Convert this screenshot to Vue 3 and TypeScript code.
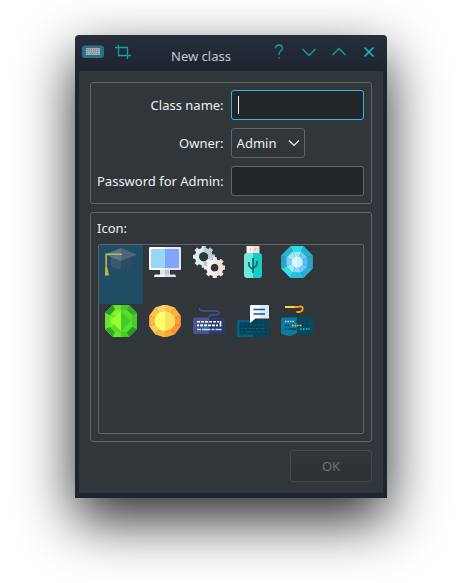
<script setup lang="ts">
import { ref } from 'vue'

interface Shape {
  d: string
  fill?: string
  stroke?: string
  width?: number
}

interface ClassIcon {
  name: string
  shapes: Shape[]
}

const className = ref('')
const owner = ref('Admin')
const password = ref('')
const selected = ref('Graduation cap')

/** Point on a circle, angle in degrees clockwise from the top. */
function polar(cx: number, cy: number, r: number, deg: number): string {
  const a = ((deg - 90) * Math.PI) / 180
  return `${(cx + r * Math.cos(a)).toFixed(2)} ${(cy + r * Math.sin(a)).toFixed(2)}`
}

/** Toothed wheel with a round hole, limited to one half or complete. */
function gear(cx: number, cy: number, outer: number, inner: number, hole: number, half: boolean): string {
  const points: string[] = []
  const teeth = half ? 4 : 8
  if (half) points.push(`${cx} ${cy - outer}`)
  for (let i = 0; i < teeth; i++) {
    const base = i * 45
    if (!(half && i === 0)) points.push(polar(cx, cy, outer, base - 10))
    points.push(polar(cx, cy, outer, base + 10), polar(cx, cy, inner, base + 13), polar(cx, cy, inner, base + 32))
  }
  if (half) {
    points.push(polar(cx, cy, outer, 170), `${cx} ${cy + outer}`, `${cx} ${cy + hole}`)
    return `M${points.join('L')}A${hole} ${hole} 0 0 0 ${cx} ${cy - hole}Z`
  }
  return `M${points.join('L')}ZM${cx} ${cy - hole}a${hole} ${hole} 0 1 0 .01 0Z`
}

/** Ring of facets between two radii, one colour per side. */
function facets(outer: number, inner: number, offset: number, colours: string[]): Shape[] {
  const step = 360 / colours.length
  return colours.map((fill, i) => {
    const a = offset + i * step
    const b = a + step
    return {
      d: `M${polar(16, 16, outer, a)}L${polar(16, 16, outer, b)}L${polar(16, 16, inner, b)}L${polar(16, 16, inner, a)}Z`,
      fill,
    }
  })
}

const icons: ClassIcon[] = [
  {
    name: 'Graduation cap',
    shapes: [
      { d: 'M6 11h10v12q-7 0-10-3z', fill: '#3d586c' },
      { d: 'M16 11h10v9q-3 3-10 3z', fill: '#314b60' },
      { d: 'M16 2v13L0 8.5z', fill: '#587589' },
      { d: 'M16 2v13l16-6.5z', fill: '#49677c' },
      { d: 'M17 8.2H1.2V25', stroke: '#c9b83a', width: 1.5 },
      { d: 'M.5 21h1.7L4 29.5H0z', fill: '#c9b83a' },
    ],
  },
  {
    name: 'Monitor',
    shapes: [
      { d: 'M11 23h5v6h-5z', fill: '#dfe3f2' },
      { d: 'M16 23h5v6h-5z', fill: '#bfc4db' },
      { d: 'M6 28.5h10V31H5q0-2 1-2.500z', fill: '#f0f3fb' },
      { d: 'M16 28.500h10q1 .5 1 2.500H16z', fill: '#d9ddec' },
      { d: 'M1 1h15v23H1q-1 0-1-1V2q0-1 1-1z', fill: '#f7f9ff' },
      { d: 'M16 1h15q1 0 1 1v21q0 1-1 1H16z', fill: '#e4e8f8' },
      { d: 'M2 3h14v19H2z', fill: '#9dd6f5' },
      { d: 'M16 3h14v19H16z', fill: '#80a6ff' },
    ],
  },
  {
    name: 'Gears',
    shapes: [
      { d: gear(10.7, 10.7, 11.2, 8.9, 4.7, false), fill: '#e3edef' },
      { d: gear(10.7, 10.7, 11.2, 8.9, 4.7, true), fill: '#b7d0d8' },
      { d: gear(21.7, 21.7, 10.7, 8.5, 3.9, false), fill: '#fff3f0' },
      { d: gear(21.7, 21.7, 10.7, 8.5, 3.9, true), fill: '#f0dfda' },
    ],
  },
  {
    name: 'USB stick',
    shapes: [
      { d: 'M9.500 0H16v8H9.500z', fill: '#fff0ec' },
      { d: 'M16 0h6.500v8H16z', fill: '#eedcd7' },
      { d: 'M13.500 2v2.500M18.500 2v2.500', stroke: '#d5c2bf', width: 1.2 },
      { d: 'M10 7h6v25h-6q-3 0-3-3V10q0-3 3-3z', fill: '#6ee8d7' },
      { d: 'M16 7h6q3 0 3 3v19q0 3-3 3h-6z', fill: '#16cdc1' },
      { d: 'M16 12v15M12 16v3q0 2 4 4.500M20 15v3q0 2-4 4', stroke: '#0d5f7b', width: 1.6 },
    ],
  },
  {
    name: 'Diamond',
    shapes: [
      ...facets(17.2, 11, -22.5, ['#2cdde6', '#28afcc', '#27a6c6', '#28b0cf', '#28bfd8', '#2ce3e9', '#27a7c6', '#28b3d0']),
      ...facets(11.4, 6, -22.5, ['#8feeff', '#66ccff', '#58bfff', '#66ccff', '#7fdcff', '#9ceaff', '#7ad4ff', '#9be9ff']),
      { d: `M${[0, 45, 90, 135, 180, 225, 270, 315].map((a) => polar(16, 16, 6.2, a - 22.5)).join('L')}Z`, fill: '#c4f5ff' },
      { d: 'M16 9.800L11 14v5l5 3z', fill: '#dcfaff' },
    ],
  },
  {
    name: 'Emerald',
    shapes: [
      { d: 'M8 0h16l8 8v16l-8 8H8l-8-8V8z', fill: '#45cc29' },
      { d: 'M8 0h8v5H9L5 9v14l4 4h7v5H8l-8-8V8z', fill: '#66e52c' },
      { d: 'M8 0l2 5-5 5-5-2zM24 32l-2-5 5-5 5 2z', fill: '#279c24' },
      { d: 'M24 0l-2 5 5 5 5-2zM8 32l2-5-5-5-5 2z', fill: '#33ad27' },
      { d: 'M10 5h12l5 5v12l-5 5H10l-5-5V10z', fill: '#5bdc2a' },
      { d: 'M5 10v12l11-6zM10 5h6v11L6 9z', fill: '#7df033' },
      { d: 'M16 6v20L6 16z', fill: '#99ff33' },
      { d: 'M16 6l10 10-10 10z', fill: '#42cc29' },
    ],
  },
  {
    name: 'Amber',
    shapes: [
      ...facets(16.6, 10.4, 0, [
        '#ffc34d', '#ffb33c', '#ff9c33', '#ff9833', '#ffa436', '#ffb743', '#ffcc57', '#ffb64a', '#ffc64f', '#ffd266',
      ]),
      { d: `M${[0, 36, 72, 108, 144, 180, 216, 252, 288, 324].map((a) => polar(16, 16, 10.6, a)).join('L')}Z`, fill: '#ffdf5e' },
      { d: 'M16 5.400v21.200l-6.200-2-3.800-5.300v-6.600l3.800-5.300z', fill: '#ffff66' },
    ],
  },
  {
    name: 'Keyboard',
    shapes: [
      { d: 'M6.500 3q0 3 3 3H23q3 0 3 2t-3 2h-5q-2 0-2 3', stroke: '#46548f', width: 1.3 },
      { d: 'M2 12.500h14V29H2q-2 0-2-2V14.500q0-2 2-2z', fill: '#47568f' },
      { d: 'M16 12.500h14q2 0 2 2V27q0 2-2 2H16z', fill: '#2d396e' },
      { d: 'M4 16.800h3m1 0h3m1 0h3m1 0h3m1 0h3m1 0h2M4 20.400h2m1 0h3m1 0h3m1 0h3m1 0h3m1 0h2M27.500 16v5.500', stroke: '#ffffff', width: 1.6 },
      { d: 'M4 24.500h4m1 0h8.500m1 0h3m1 0h6', stroke: '#a9e3f8', width: 1.6 },
    ],
  },
  {
    name: 'Keyboard chat',
    shapes: [
      { d: 'M1.500 15H16v17H1.500Q0 32 0 30.500v-14Q0 15 1.500 15z', fill: '#07607f' },
      { d: 'M16 15h14.500q1.500 0 1.500 1.500v14q0 1.500-1.500 1.500H16z', fill: '#06465c' },
      { d: 'M2.500 17.500h27v12h-27z', fill: '#064055' },
      { d: 'M4 20h3m1 0h3m1 0h3m1 0h3m1 0h3m1 0h4M4 23.500h2m1 0h3m1 0h3m1 0h3m1 0h3m1 0h5M4 27h3m1 0h12m1 0h3m1 0h3', stroke: '#076079', width: 1.2 },
      { d: 'M13.500 0H23v13.500h-4.500L13 18V.500q0-.500.500-.500z', fill: '#f4f8ff' },
      { d: 'M23 0h8.500q.500 0 .500.500V13q0 .500-.500.500H23z', fill: '#dde8f8' },
      { d: 'M16.500 4.500H28M16.500 9H28', stroke: '#07607f', width: 1.5 },
    ],
  },
  {
    name: 'Wave keyboard',
    shapes: [
      { d: 'M16.500 12.500V8q0-1 2-1', stroke: '#083f54', width: 2 },
      { d: 'M4 2h10', stroke: '#ffd23c', width: 2 },
      { d: 'M13.500 2q4 0 6-.500 2.500 0 2.200 2.500-.300 3-3.700 3h-2.500', stroke: '#ff9f22', width: 1.8 },
      { d: 'M2 12.500h14V28q-3 1-5 2.500-5 1.500-11-2V14.500q0-2 2-2z', fill: '#0a7a9e' },
      { d: 'M16 12.500h14q2 0 2 2v14q-6 3.500-11 2Q19 29 16 28z', fill: '#08495f' },
      { d: 'M4 16.500h1.500m1 0h1.500m1 0h1.500m1 0h1.500', stroke: '#ecc9ee', width: 1.5 },
      { d: 'M15 16.500h1.500m1 0h1.500m2 0h1.500m2 0h3M4 20.500h1.500m1 0h1.500m13.500 0h1.500m1.500 0h3M4 24h1.500m2 0h8', stroke: '#063d50', width: 1.5 },
      { d: 'M11 20.500h1.500m1 0h1.500m1 0h1.500m1 0h2', stroke: '#ffc33a', width: 1.5 },
      { d: 'M19 24h1.500m1.500 0h1.500m1.500 0h1.500m1 0h1', stroke: '#17d2cf', width: 1.5 },
    ],
  },
]
</script>

<template>
  <div class="desktop">
    <section class="window" aria-labelledby="window-title">
      <header class="titlebar">
        <div class="tools">
          <svg class="app-icon" viewBox="0 0 22 14" aria-hidden="true">
            <rect x="0.500" y="1" width="21" height="11.500" rx="2" fill="#16789a" stroke="#4e6472" />
            <rect x="4" y="3" width="14" height="7" fill="#a6a9a9" />
            <path d="M5 4.500h12M5 6.500h12M5 8.500h2m1 0h6m1 0h2" stroke="#7d8385" stroke-width="1" stroke-dasharray="1 1" />
          </svg>
          <button class="title-button" type="button" aria-label="Tile window">
            <svg viewBox="0 0 16 16"><path d="M3.500 1v10.500H16M0 3.500h12.500V15" /></svg>
          </button>
        </div>
        <h1 id="window-title" class="title">New class</h1>
        <div class="window-buttons">
          <button class="title-button" type="button" aria-label="Help">
            <svg viewBox="0 0 16 16"><path d="M4.500 4.500q0-3.500 3.500-3.500t3.500 3.200c0 2.800-3.500 2.800-3.500 5.500v1.300M8 13.200v1.600" /></svg>
          </button>
          <button class="title-button" type="button" aria-label="Minimize">
            <svg viewBox="0 0 16 16"><path d="M1.500 5L8 11.500 14.500 5" /></svg>
          </button>
          <button class="title-button" type="button" aria-label="Maximize">
            <svg viewBox="0 0 16 16"><path d="M1.500 11L8 4.500l6.500 6.500" /></svg>
          </button>
          <button class="title-button" type="button" aria-label="Close">
            <svg viewBox="0 0 16 16"><path class="cross" d="M3.500 3.500l9 9M12.500 3.500l-9 9" /></svg>
          </button>
        </div>
      </header>

      <form class="content" @submit.prevent>
        <div class="group fields">
          <label for="class-name">Class name:</label>
          <input id="class-name" v-model="className" class="control text-box current" type="text" />
          <label for="owner">Owner:</label>
          <div class="select-wrap">
            <select id="owner" v-model="owner" class="control owner">
              <option>Admin</option>
            </select>
            <svg class="arrow" viewBox="0 0 12 8" aria-hidden="true"><path d="M1 1.500l5 5 5-5" /></svg>
          </div>
          <label for="password">Password for Admin:</label>
          <input id="password" v-model="password" class="control text-box" type="password" />
        </div>

        <div class="group picker">
          <span id="icon-label">Icon:</span>
          <div class="icon-list" role="group" aria-labelledby="icon-label">
            <button
              v-for="icon in icons"
              :key="icon.name"
              type="button"
              class="icon-cell"
              :class="{ selected: icon.name === selected }"
              :aria-label="icon.name"
              :aria-pressed="icon.name === selected"
              @click="selected = icon.name"
            >
              <svg class="class-icon" viewBox="0 0 32 32">
                <path
                  v-for="(shape, i) in icon.shapes"
                  :key="i"
                  :d="shape.d"
                  :fill="shape.fill ?? 'none'"
                  fill-rule="evenodd"
                  :stroke="shape.stroke ?? 'none'"
                  :stroke-width="shape.width ?? 0"
                />
              </svg>
            </button>
          </div>
        </div>

        <button class="ok" type="submit" disabled>OK</button>
      </form>
    </section>
  </div>
</template>

<style>
body {
  margin: 0;
  background: #ffffff;
}
</style>

<style scoped>
.desktop {
  box-sizing: border-box;
  display: flex;
  min-height: 100vh;
  padding: 35px 75px 85px;
  overflow: hidden;
  font-family: 'Noto Sans', sans-serif;
  font-size: 13px;
  line-height: 18px;
  color: #eff0f1;
}

.window {
  box-sizing: border-box;
  display: flex;
  flex: 1;
  flex-direction: column;
  min-width: 0;
  padding: 0 4px 5px;
  border-radius: 4px 4px 0 0;
  background: linear-gradient(#272d3a, #1e2530 36px);
  box-shadow: 0 22px 56px rgba(0, 0, 0, 0.84);
}

.titlebar {
  display: grid;
  grid-template-columns: auto 1fr auto;
  height: 36px;
}

.tools {
  display: flex;
  align-items: center;
  gap: 9px;
  padding: 0 4px 2px 3px;
}

.app-icon {
  width: 22px;
  height: 14px;
}

.title {
  margin: 0;
  padding-top: 12px;
  font-size: 13px;
  font-weight: 400;
  text-align: center;
  color: #c5cbd3;
}

.window-buttons {
  display: flex;
  gap: 2px;
  align-items: center;
  padding-bottom: 2px;
}

.title-button {
  display: flex;
  justify-content: center;
  width: 28px;
  padding: 0;
  border: 0;
  background: none;
}

.title-button svg {
  width: 16px;
  height: 16px;
  fill: none;
  stroke: #0aa5a3;
  stroke-width: 1.3;
}

.title-button .cross {
  stroke: #08c0be;
  stroke-width: 1.6;
}

.tools .title-button {
  width: 20px;
}

.content {
  display: flex;
  flex: 1;
  flex-direction: column;
  gap: 8px;
  padding: 11px;
  background: #31363b;
}

.group {
  border: 1px solid #616569;
  border-radius: 3px;
}

.fields {
  display: grid;
  grid-template-columns: auto minmax(0, 1fr);
  gap: 8px 7px;
  align-items: center;
  padding: 7px 7px 7px 6px;
}

.fields label {
  text-align: right;
  white-space: nowrap;
}

.control {
  box-sizing: border-box;
  height: 30px;
  border: 1px solid #616569;
  border-radius: 3px;
  outline: 0;
  font: inherit;
  color: inherit;
}

.text-box {
  width: 100%;
  padding: 0 6px;
  background: #232629;
}

.text-box.current {
  border-color: #3daee9;
  background: linear-gradient(#eff0f1, #eff0f1) 6px center / 1px 18px no-repeat #232629;
}

.select-wrap {
  position: relative;
  display: flex;
  justify-self: start;
}

.owner {
  width: 74px;
  padding: 0 5px;
  appearance: none;
  background: linear-gradient(#33383d, #2f3439);
}

.arrow {
  position: absolute;
  top: 11px;
  right: 5px;
  width: 12px;
  height: 8px;
  fill: none;
  stroke: #eff0f1;
  stroke-width: 1.2;
  pointer-events: none;
}

.picker {
  display: flex;
  flex: 1;
  flex-direction: column;
  gap: 7px;
  padding: 6px 7px 7px;
}

.picker > span {
  margin-left: -1px;
}

.icon-list {
  display: grid;
  flex: 1;
  grid-template-columns: repeat(auto-fill, 44px);
  grid-auto-rows: 59px;
  padding-right: 40px;
  border: 1px solid #616569;
  border-radius: 2px;
}

.icon-cell {
  display: flex;
  justify-content: center;
  align-items: flex-start;
  padding: 1px 0 0;
  border: 0;
  background: none;
}

.icon-cell.selected {
  background: #224e65;
}

.class-icon {
  width: 32px;
  height: 32px;
}

.ok {
  align-self: flex-end;
  width: 82px;
  height: 32px;
  padding: 0;
  border: 1px solid #44484c;
  border-radius: 3px;
  background: linear-gradient(#31363b, #2d3135);
  font: inherit;
  color: #6e7275;
}
</style>
